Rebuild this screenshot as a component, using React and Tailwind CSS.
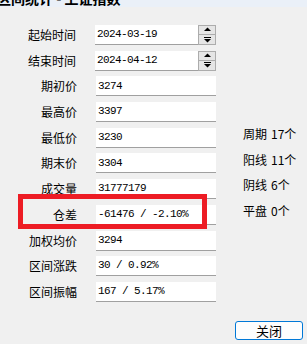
import React from "react";

const cjk = { fontFamily: '"Noto Sans CJK SC", "Noto Sans", sans-serif' };
const mono = { fontFamily: '"Liberation Mono", "DejaVu Sans Mono", monospace' };

function Spinner() {
  return (
    <div className="flex flex-col w-[18px] h-[20px]">
      <div className="h-[10px] border border-[#acacac] bg-[#e5e5e5] flex flex-col items-center justify-center">
        <svg width="9" height="6" viewBox="0 0 9 6">
          <path d="M4.5 0.5 L8 4 L1 4 Z" fill="#000" />
        </svg>
      </div>
      <div className="h-[10px] border border-t-0 border-[#acacac] bg-[#e5e5e5] flex flex-col items-center justify-center">
        <svg width="9" height="6" viewBox="0 0 9 6">
          <rect x="1" y="0" width="7" height="1" fill="#000" />
          <path d="M1 2 L8 2 L4.5 5.5 Z" fill="#000" />
        </svg>
      </div>
    </div>
  );
}

function Row({ label, value, spin }) {
  return (
    <div className="flex items-center h-[20px]">
      <div className="w-[77px] text-right text-[12px] leading-none text-black" style={cjk}>
        {label}
      </div>
      <div className="ml-[19px] flex">
        <div
          className={(spin ? "w-[103px]" : "w-[120px]") + " h-[20px] bg-white border-b border-[#a0a0a0] flex items-center pl-[2px] text-[11px] tracking-[-0.6px] text-black whitespace-pre"}
          style={mono}
        >
          {value}
        </div>
        {spin && <Spinner />}
      </div>
    </div>
  );
}

function Stat({ k, v }) {
  return (
    <div className="flex items-center h-[20px] text-[12px] leading-none text-black" style={cjk}>
      <span>{k}</span>
      <span className="ml-[4px]">{v}</span>
    </div>
  );
}

export default function App() {
  const rows = [
    ["起始时间", "2024-03-19", true],
    ["结束时间", "2024-04-12", true],
    ["期初价", "3274"],
    ["最高价", "3397"],
    ["最低价", "3230"],
    ["期末价", "3304"],
    ["成交量", "31777179"],
    ["仓差", "-61476 / -2.10%"],
    ["加权均价", "3294"],
    ["区间涨跌", "30 / 0.92%"],
    ["区间振幅", "167 / 5.17%"],
  ];
  return (
    <div className="relative w-[307px] h-[344px] bg-[#f0f0f0] overflow-hidden">
      <div className="h-[7px] bg-[#eaf0f8] overflow-hidden">
        <div className="mt-[-10px] text-[14px] leading-[16px] text-black font-bold ml-[-3px]" style={cjk}>
          区间统计 - 上证指数
        </div>
      </div>
      <div className="flex pt-[18px]">
        <div className="flex flex-col gap-[5.7px] w-[216px]">
          {rows.map(([l, v, s]) => (
            <Row key={l} label={l} value={v} spin={s} />
          ))}
        </div>
        <div className="flex flex-col gap-[5.7px] pl-[27px] pt-[99px]">
          <Stat k="周期" v="17个" />
          <Stat k="阳线" v="11个" />
          <Stat k="阴线" v="6个" />
          <Stat k="平盘" v="0个" />
        </div>
      </div>
      <div className="flex justify-end pr-[4px] mt-[19px]">
        <button
          className="w-[68px] h-[19px] rounded-[3px] border border-[#0078d7] bg-[#fdfdfd] text-[13px] leading-none text-black flex items-center justify-center"
          style={cjk}
        >
          关闭
        </button>
      </div>
      <div className="absolute left-[18px] top-[194px] w-[189px] h-[35px] border-[5px] border-[#ed1c24] pointer-events-none" />
    </div>
  );
}
